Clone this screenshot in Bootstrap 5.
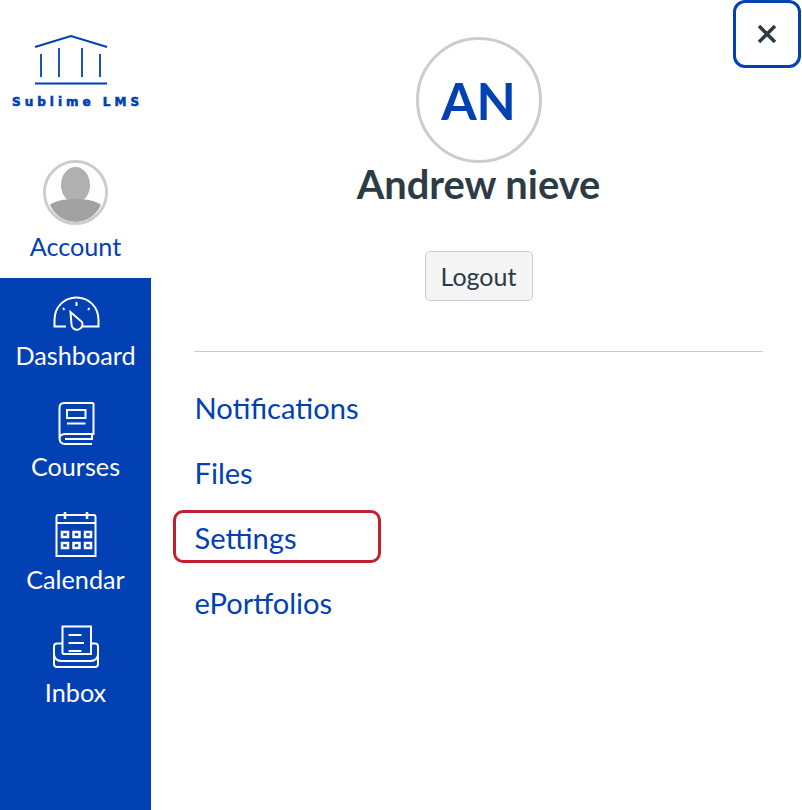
<!DOCTYPE html>
<html lang="en">
<head>
<meta charset="UTF-8">
<meta name="viewport" content="width=device-width, initial-scale=1.0">
<link href="https://cdn.jsdelivr.net/npm/bootstrap@5.3.3/dist/css/bootstrap.min.css" rel="stylesheet">
<style>
body { font-family: Lato, "Liberation Sans", sans-serif; color: #2d3b45; height: 810px; overflow: hidden; }
.shell { height: 810px; }
.side { width: 151px; flex: none; }
.side-top { height: 278px; padding-top: 35px; }
.logo { width: 140px; height: 78px; margin-left: 11px; display: block; }
.logo text { font-family: "DejaVu Sans", sans-serif; font-weight: 700; font-size: 12px; letter-spacing: 4px; fill: #0241b3; stroke: #0241b3; stroke-width: .6px; }
.acct { margin-top: 47px; color: #0241b3; text-decoration: none; font-size: 25.2px; line-height: 30px; }
.acct-pic { width: 65px; height: 65px; border: 3px solid #c7cdd1; border-radius: 50%; overflow: hidden; margin-bottom: 6px; display: block; }
.side-nav { background: #0241b3; }
.side-link { color: #fff; text-decoration: none; font-size: 25.2px; line-height: 30px; height: 113px; }
.side-link svg { width: 50px; height: 50px; margin-bottom: 2px; display: block; }
.side-first { margin-top: 12px; height: 109px; }
.side-first svg { margin-bottom: 0; }
.pane { padding: 37px 39px 0 43px; }
.initials { width: 126px; height: 126px; padding-top: 3px; border: 3px solid #c7cdd1; border-radius: 50%; color: #0241b3; font-size: 51px; font-weight: 700; }
.who { font-size: 39.8px; font-weight: 700; line-height: 46px; margin: -2px 0 44px; }
.logout-btn { width: 108px; height: 50px; background: #f5f5f5; border: 1px solid #c7cdd1; border-radius: 5px; color: #2d3b45; font-size: 25px; line-height: 1; padding: 0; margin-bottom: 50px; }
.rule { border-top: 1px solid #c7cdd1; opacity: 1; margin: 0 0 23px; }
.menu-link { color: #0241b3; text-decoration: none; font-size: 29.1px; line-height: 65px; height: 65px; padding-left: .5px; display: block; }
.close-x { top: 0; right: 1px; width: 68px; height: 68px; background: #fff; border: 3px solid #0241b3; border-radius: 12px; padding: 0; }
.close-x svg { width: 22px; height: 22px; }
.mark-red { left: -21px; top: 5px; width: 208px; height: 53px; border: 3px solid #c1202f; border-radius: 10px; }
</style>
<script defer src="https://cdn.jsdelivr.net/npm/bootstrap@5.3.3/dist/js/bootstrap.bundle.min.js"></script>
<title>Account</title>
</head>
<body>
<div class="shell d-flex position-relative">
  <nav class="side d-flex flex-column">
    <div class="side-top">
      <svg class="logo" viewBox="0 0 140 78">
        <g fill="none" stroke="#0241b3" stroke-width="2">
          <path d="M24 12 L60 1 L96 12"/>
          <path d="M30 19 V42 M48 13 V42 M71 13 V42 M89 19 V42" stroke-width="1.800"/>
          <path d="M24 48.500 H96"/>
        </g>
        <text x="1" y="71">Sublime LMS</text>
      </svg>
      <a href="#" class="acct d-flex flex-column align-items-center">
        <svg class="acct-pic" viewBox="0 0 59 59">
          <rect width="59" height="59" fill="#fff"/>
          <ellipse cx="29.500" cy="22" rx="14.500" ry="18" fill="#b0b0b0"/>
          <path d="M4 42 C12 34 47 34 55 42 C50 53 40 59 29.500 59 C19 59 9 53 4 42Z" fill="#a2a2a2"/>
        </svg>
        Account
      </a>
    </div>
    <div class="side-nav flex-grow-1 d-flex flex-column">
      <a href="#" class="side-link side-first d-flex flex-column align-items-center">
        <svg viewBox="0 0 50 50" fill="none" stroke="#fff" stroke-width="2">
          <path d="M15 36.500 H3.500 V30 C3.500 17 13 7.500 25.500 7.500 C38 7.500 47.500 17 47.500 30 V36.500 H32"/>
          <path d="M19.500 22 L31 32 A5.500 5.500 0 1 1 20.500 34.500 Z"/>
          <path d="M25.500 12 V16 M12 18 L13.500 20 M38.500 18 L37 20"/>
        </svg>
        Dashboard
      </a>
      <a href="#" class="side-link d-flex flex-column align-items-center">
        <svg viewBox="0 0 50 50" fill="none" stroke="#fff" stroke-width="2">
          <path d="M42.500 4 H13 Q8.500 4 8.500 9 V39 Q8.500 45 14 45 H41 M42.500 4 V35 H14 Q8.500 35 8.500 40 M14 40 H41 V35"/>
          <path d="M16 11 H34.500 V19 H16 Z M16 24.500 H34.500"/>
        </svg>
        Courses
      </a>
      <a href="#" class="side-link d-flex flex-column align-items-center">
        <svg viewBox="0 0 50 50" fill="none" stroke="#fff" stroke-width="2">
          <path d="M5.500 5 Q5.500 3 7.500 3 H42.500 Q44.500 3 44.500 5 V44 H5.500 Z M5.500 11 H44.500"/>
          <path d="M14 0 V7 M36 0 V7" stroke-width="2.500"/>
          <path d="M11 20 H17 V25 H11 Z M22.500 20 H28.500 V25 H22.500 Z M34 20 H40 V25 H34 Z M11 31 H17 V36 H11 Z M22.500 31 H28.500 V36 H22.500 Z M34 31 H40 V36 H34 Z" stroke-width="2.500"/>
        </svg>
        Calendar
      </a>
      <a href="#" class="side-link d-flex flex-column align-items-center">
        <svg viewBox="0 0 50 50" fill="none" stroke="#fff" stroke-width="2">
          <path d="M11.500 29 V1.500 H40 V29 H11.500"/>
          <path d="M17.500 10 H30.500 M17.500 18 H33 M17.500 26 H30.500"/>
          <path d="M11.500 18.500 H6 Q3 18.500 3 21.500 V39 Q3 42 6 42 H44 Q47 42 47 39 V21.500 Q47 18.500 44 18.500 H40 M3 30 Q4 36 11 36 H39 Q46 36 47 30"/>
        </svg>
        Inbox
      </a>
    </div>
  </nav>
  <main class="pane flex-grow-1">
    <div class="d-flex flex-column align-items-center">
      <div class="initials d-flex align-items-center justify-content-center">AN</div>
      <h2 class="who">Andrew nieve</h2>
      <button type="button" class="btn logout-btn">Logout</button>
    </div>
    <hr class="rule">
    <div><a href="#" class="menu-link">Notifications</a></div>
    <div><a href="#" class="menu-link">Files</a></div>
    <div class="position-relative"><a href="#" class="menu-link">Settings</a><span class="mark-red position-absolute"></span></div>
    <div><a href="#" class="menu-link">ePortfolios</a></div>
  </main>
  <button type="button" class="close-x position-absolute d-flex align-items-center justify-content-center" aria-label="Close">
    <svg viewBox="0 0 22 22" stroke="#2d3b45" stroke-width="3.500"><path d="M3 3 L19 19 M19 3 L3 19"/></svg>
  </button>
</div>
</body>
</html>
